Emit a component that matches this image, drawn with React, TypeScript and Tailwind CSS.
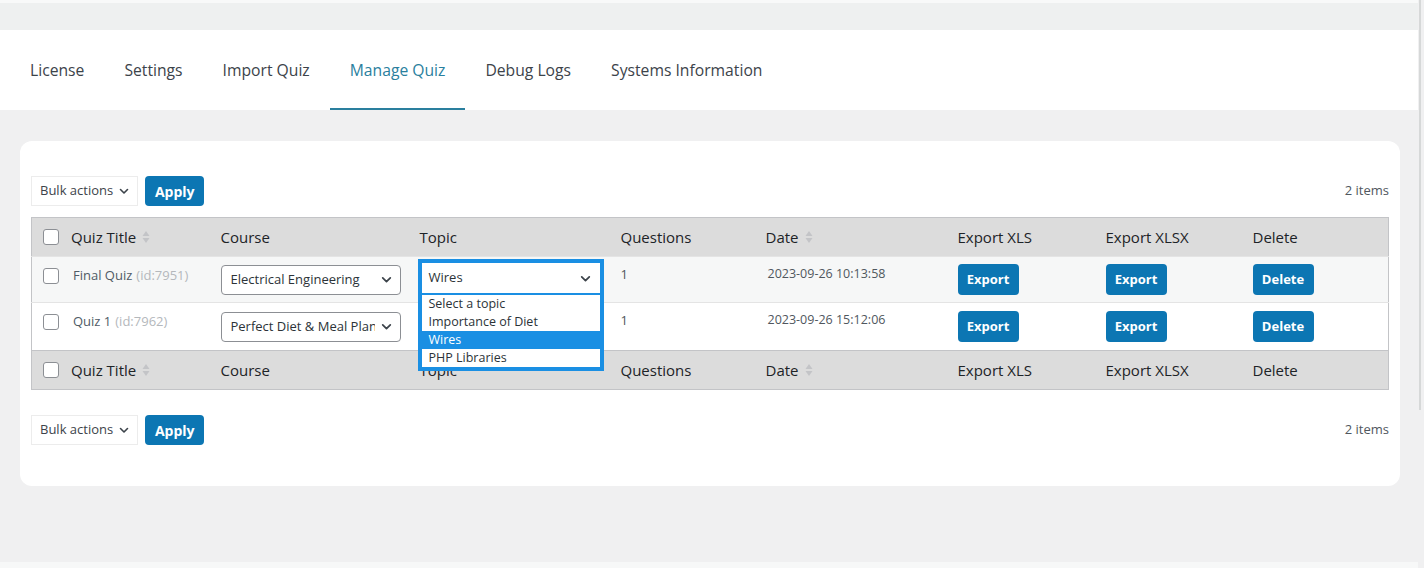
import React from 'react';

const tabs = ['License', 'Settings', 'Import Quiz', 'Manage Quiz', 'Debug Logs', 'Systems Information'];

const rows = [
  { title: 'Final Quiz', id: 7951, course: 'Electrical Engineering', questions: 1, date: '2023-09-26 10:13:58', bg: 'bg-[#f6f7f7]' },
  { title: 'Quiz 1', id: 7962, course: 'Perfect Diet & Meal Plan for Weight Loss', questions: 1, date: '2023-09-26 15:12:06', bg: 'bg-white' },
];

const topics = ['Select a topic', 'Importance of Diet', 'Wires', 'PHP Libraries'];

function Chevron({ className = '' }: { className?: string }) {
  return (
    <svg viewBox="0 0 12 12" className={className} fill="none" stroke="currentColor" strokeWidth="1.6" strokeLinecap="round" strokeLinejoin="round">
      <path d="M2.5 4.5 6 8l3.5-3.5" />
    </svg>
  );
}

function SortIcon() {
  return (
    <svg viewBox="0 0 8 16" className="w-[8px] h-[16px] ml-[6px]" fill="#c3c4c7">
      <path d="M4 2 7.5 7h-7z" />
      <path d="M4 14 .5 9h7z" />
    </svg>
  );
}

function Checkbox() {
  return <span className="inline-block w-[16px] h-[16px] rounded-[3px] border border-[#8c8f94] bg-white shrink-0" />;
}

function BlueButton({ label }: { label: string }) {
  return (
    <button className="h-[31px] w-[61px] rounded-[4px] bg-[#0c76b3] text-white text-[13px] font-bold leading-none">
      {label}
    </button>
  );
}

function TableNav() {
  return (
    <div className="flex items-center">
      <div className="flex items-center h-[30px] pl-[8px] pr-[7px] border border-[#ececec] bg-white text-[13px] text-[#3c434a] gap-[5px]">
        Bulk actions
        <Chevron className="w-[12px] h-[12px] text-[#3c434a]" />
      </div>
      <button className="ml-[7px] h-[30px] w-[59px] rounded-[4px] bg-[#0c76b3] text-white text-[14px] font-bold">Apply</button>
      <span className="ml-auto text-[13px] text-[#50575e]">2 items</span>
    </div>
  );
}

function HeaderRow() {
  return (
    <tr className="bg-[#dcdcdc] h-[39px] text-[15px] text-[#1d2327]">
      <th className="text-left font-normal pl-[11px]">
        <div className="flex items-center">
          <Checkbox />
          <span className="ml-[12px]">Quiz Title</span>
          <SortIcon />
        </div>
      </th>
      <th className="text-left font-normal">Course</th>
      <th className="text-left font-normal">Topic</th>
      <th className="text-left font-normal">Questions</th>
      <th className="text-left font-normal">
        <div className="flex items-center">Date<SortIcon /></div>
      </th>
      <th className="text-left font-normal">Export XLS</th>
      <th className="text-left font-normal">Export XLSX</th>
      <th className="text-left font-normal">Delete</th>
    </tr>
  );
}

function TopicDropdown() {
  return (
    <div className="absolute left-[-2px] top-[2px] w-[186px] bg-[#1a8fe3] p-[4px] z-10">
      <div className="h-[30px] bg-white flex items-center justify-between pl-[7px] pr-[8px] text-[13px] text-[#2c3338]">
        Wires
        <Chevron className="w-[13px] h-[13px] text-[#3c434a]" />
      </div>
      <div className="mt-[2px] text-[12.5px] leading-[18px]">
        {topics.map(t => (
          <div key={t} className={t === 'Wires' ? 'bg-[#1a8fe3] text-white px-[7px]' : 'bg-white text-[#2c3338] px-[7px]'}>
            {t}
          </div>
        ))}
      </div>
    </div>
  );
}

export default function App() {
  return (
    <div className="w-[1424px] h-[568px] bg-[#f0f0f1] flex overflow-hidden" style={{ fontFamily: '"Open Sans", "Noto Sans", sans-serif' }}>
      <div className="flex-1 flex flex-col">
        <div className="h-[30px] bg-[#eef0f0] border-t-[3px] border-[#f8f9f9]" />
        <nav className="h-[80px] bg-white flex items-stretch pl-[10px]">
          {tabs.map(t => (
            <div
              key={t}
              className={
                t === 'Manage Quiz'
                  ? 'px-[20px] flex items-center text-[15.7px] text-[#2a7f9e] border-b-2 border-[#2a7f9e] pt-[3px]'
                  : 'px-[20px] flex items-center text-[15.7px] text-[#3c434a] pt-[1px]'
              }
            >
              {t}
            </div>
          ))}
        </nav>

        <div className="ml-[20px] mr-[18px] mt-[31px] bg-white rounded-[12px] px-[11px] pt-[35px] pb-[41px]">
          <TableNav />

          <table className="mt-[11px] w-full table-fixed border border-[#c3c4c7] border-collapse">
            <colgroup>
              <col className="w-[189px]" />
              <col className="w-[199px]" />
              <col className="w-[201px]" />
              <col className="w-[145px]" />
              <col className="w-[192px]" />
              <col className="w-[148px]" />
              <col className="w-[147px]" />
              <col />
            </colgroup>
            <thead>
              <HeaderRow />
            </thead>
            <tbody>
              {rows.map((r, i) => (
                <tr key={r.id} className={`${r.bg} ${i === 0 ? 'h-[46px]' : 'h-[48px]'} text-[13px] text-[#50575e] border-t border-[#e4e4e4]`}>
                  <td className="pl-[11px] align-top pt-[9px]">
                    <div className="flex items-center">
                      <Checkbox />
                      <span className="ml-[14px] text-[#4f5b66]">{r.title}</span>
                      <span className="ml-[4px] text-[#b4b8bc]">(id:{r.id})</span>
                    </div>
                  </td>
                  <td className="align-middle">
                    <div className="w-[180px] h-[30px] border border-[#8c8f94] rounded-[4px] bg-white flex items-center pl-[9px] pr-[7px] text-[#2c3338]">
                      <span className="flex-1 overflow-hidden whitespace-nowrap">{r.course}</span>
                      <Chevron className="w-[13px] h-[13px] text-[#3c434a] shrink-0 ml-[5px]" />
                    </div>
                  </td>
                  <td className="align-middle relative">
                    {i === 0 && <TopicDropdown />}
                  </td>
                  <td className="align-top pt-[8px]">{r.questions}</td>
                  <td className="align-top pt-[8px] pl-[2px] text-[12.5px]">{r.date}</td>
                  <td className="align-middle"><BlueButton label="Export" /></td>
                  <td className="align-middle"><BlueButton label="Export" /></td>
                  <td className="align-middle"><BlueButton label="Delete" /></td>
                </tr>
              ))}
            </tbody>
            <tfoot className="border-t border-[#c3c4c7]">
              <HeaderRow />
            </tfoot>
          </table>

          <div className="mt-[25px]">
            <TableNav />
          </div>
        </div>
        <div className="flex-1" />
        <div className="h-[6px] bg-[#f7f8f8]" />
      </div>
      <div className="w-[6px] flex flex-col">
        <div className="h-[410px] w-[2px] ml-[1px] bg-[#d6d8d8]" />
      </div>
    </div>
  );
}
